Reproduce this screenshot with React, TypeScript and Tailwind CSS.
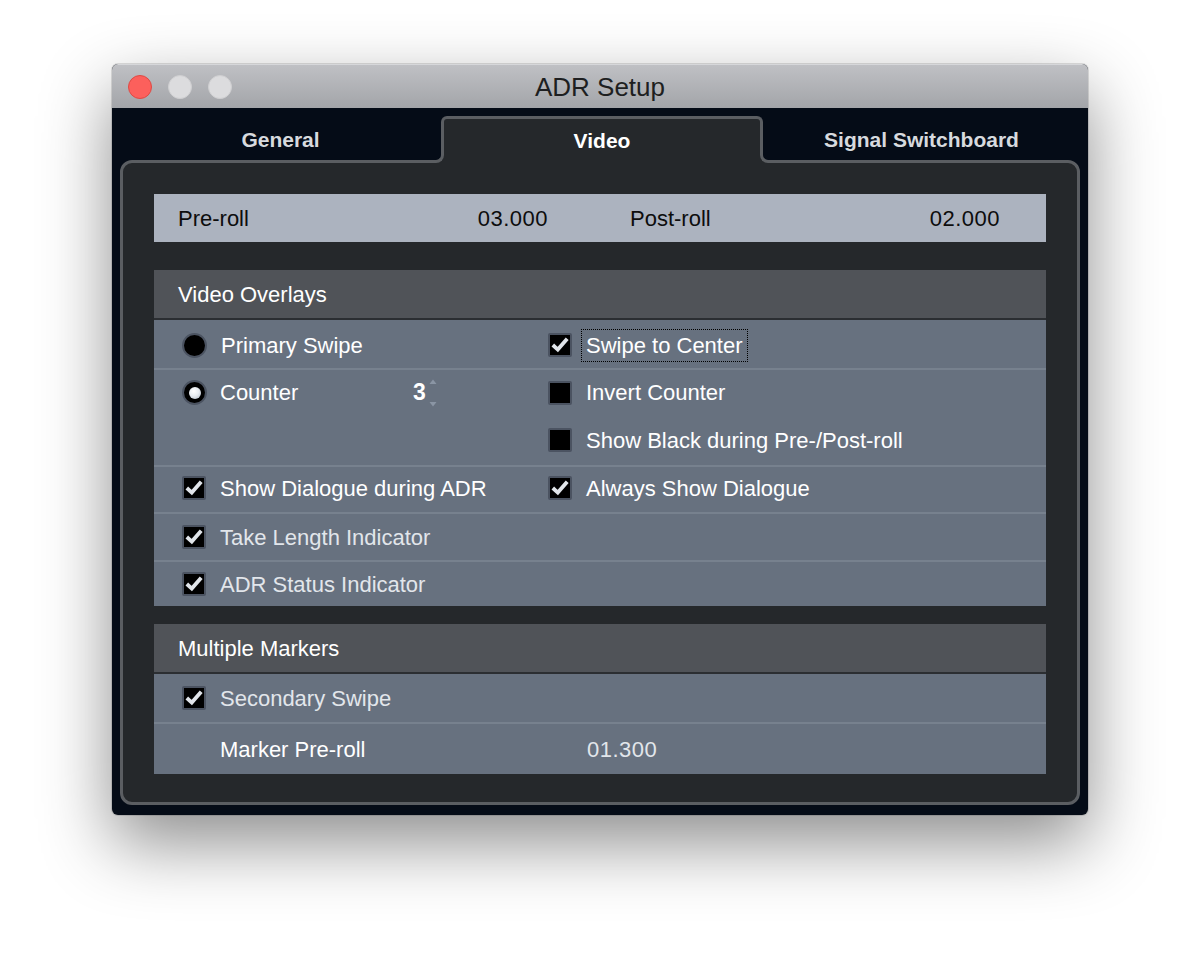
import React from 'react';

const FONT = "font-['Liberation_Sans',Arial,Helvetica,sans-serif]";

function Check() {
  return (
    <span className="flex h-[24px] w-[24px] shrink-0 items-center justify-center rounded-[2px] border-2 border-[#4b5361] bg-black">
      <svg width="20" height="20" viewBox="0 0 20 20">
        <path d="M2.8 10 L7.8 14.6 L17.2 3.8" fill="none" stroke="#e1e5ea" strokeWidth="3.8" strokeLinejoin="miter" />
      </svg>
    </span>
  );
}

function Box() {
  return <span className="h-[24px] w-[24px] shrink-0 rounded-[2px] border-2 border-[#4b5361] bg-black" />;
}

function Radio({ on }: { on?: boolean }) {
  return (
    <span className="flex h-[25px] w-[25px] shrink-0 items-center justify-center rounded-full border-2 border-[#4b5361] bg-black">
      {on && <span className="h-[12px] w-[12px] rounded-full bg-[radial-gradient(circle_at_40%_35%,#ffffff_0%,#e8ecf1_45%,#aeb7c3_100%)]" />}
    </span>
  );
}

function Item({
  control,
  label,
  dim,
}: {
  control: React.ReactNode;
  label: React.ReactNode;
  dim?: boolean;
}) {
  return (
    <div className="flex items-center gap-[14px]">
      {control}
      <span className={dim ? 'text-[#e2e6eb]' : 'text-white'}>{label}</span>
    </div>
  );
}

function SectionHeader({ title }: { title: string }) {
  return (
    <div className="flex h-[50px] items-center border-b-2 border-[#2b2e32] bg-[#505358] pl-[24px] text-white">
      {title}
    </div>
  );
}

export default function App() {
  return (
    <div className={`min-h-[976px] w-full bg-white pl-[112px] pt-[64px] text-[22px] ${FONT}`}>
      <div className="w-[976px] overflow-hidden rounded-[6px] bg-[#050c17] shadow-[0_28px_70px_rgba(0,0,0,0.45),0_0_0_1px_rgba(0,0,0,0.12)]">
        {/* Title bar */}
        <div className="grid h-[44px] grid-cols-[1fr_auto_1fr] items-center border-t border-[#d6d7da] bg-gradient-to-b from-[#bfc0c4] to-[#a3a5a9]">
          <div className="flex items-center gap-[16px] pl-[16px]">
            <span className="h-[24px] w-[24px] rounded-full border border-[#de4a44] bg-[#fc605c]" />
            <span className="h-[24px] w-[24px] rounded-full border border-[#cfcfd1] bg-[#dcdcde]" />
            <span className="h-[24px] w-[24px] rounded-full border border-[#cfcfd1] bg-[#dcdcde]" />
          </div>
          <div className="text-[26px] leading-none text-[#1e1f21]">ADR Setup</div>
          <div />
        </div>

        {/* Tabs */}
        <div className="grid h-[52px] grid-cols-[321px_322px_1fr] px-[8px] text-[21px] font-bold">
          <div className="flex items-center justify-center pt-[12px] text-[#d7dade]">General</div>
          <div className="relative z-10 mb-[-3px] mt-[8px] flex h-[47px] items-center justify-center rounded-t-[6px] border-[3px] border-b-0 border-[#5b5e62] bg-[#25282b] text-white">
            Video
            <span className="absolute bottom-0 left-[-8px] h-[8px] w-[8px] bg-[#25282b]">
              <span className="block h-full w-full rounded-br-[8px] border-b-[3px] border-r-[3px] border-[#5b5e62] bg-[#050c17]" />
            </span>
            <span className="absolute bottom-0 right-[-8px] h-[8px] w-[8px] bg-[#25282b]">
              <span className="block h-full w-full rounded-bl-[8px] border-b-[3px] border-l-[3px] border-[#5b5e62] bg-[#050c17]" />
            </span>
          </div>
          <div className="flex items-center justify-center pt-[12px] text-[#d7dade]">Signal Switchboard</div>
        </div>

        {/* Panel */}
        <div className="mx-[8px] mb-[10px] rounded-[12px] border-[3px] border-[#5b5e62] bg-[#25282b] px-[31px] pb-[28px] pt-[31px]">
          {/* Pre/Post roll */}
          <div className="flex h-[48px] items-center bg-[#acb3bf] pl-[24px] text-[#0d0d0d]">
            <span className="w-[230px]">Pre-roll</span>
            <span className="w-[140px] text-right tracking-[0.5px]">03.000</span>
            <span className="w-[82px]" />
            <span className="w-[230px]">Post-roll</span>
            <span className="w-[140px] text-right tracking-[0.5px]">02.000</span>
          </div>

          {/* Video Overlays */}
          <div className="mt-[28px]">
            <SectionHeader title="Video Overlays" />
            <div className="bg-[#67717f]">
              <div className="grid h-[48px] grid-cols-[394px_1fr] items-center pt-[2px]">
                <div className="pl-[28px]">
                  <Item control={<Radio />} label="Primary Swipe" />
                </div>
                <div className="flex items-center gap-[9px]">
                  <Check />
                  <span className="border border-dotted border-black px-[4px] py-[3px] leading-[25px] text-white">
                    Swipe to Center
                  </span>
                </div>
              </div>

              <div className="grid h-[97px] grid-cols-[394px_1fr] border-t-2 border-[#77818e]">
                <div className="flex h-[45px] items-center pl-[28px]">
                  <Radio on />
                  <span className="ml-[13px] w-[193px] text-white">Counter</span>
                  <span className="text-[23px] font-bold text-white">3</span>
                  <svg className="ml-[3px]" width="8" height="28" viewBox="0 0 8 28">
                    <path d="M4 0.5 L7.5 5 L0.5 5 Z" fill="#8a95a4" />
                    <path d="M4 27.5 L7.5 23 L0.5 23 Z" fill="#8a95a4" />
                  </svg>
                </div>
                <div className="flex flex-col">
                  <div className="flex h-[45px] items-center">
                    <Item control={<Box />} label="Invert Counter" />
                  </div>
                  <div className="flex h-[50px] items-center">
                    <Item control={<Box />} label="Show Black during Pre-/Post-roll" />
                  </div>
                </div>
              </div>

              <div className="grid h-[47px] grid-cols-[394px_1fr] items-center border-t-2 border-[#77818e] pb-[3px]">
                <div className="pl-[28px]">
                  <Item control={<Check />} label="Show Dialogue during ADR" />
                </div>
                <Item control={<Check />} label="Always Show Dialogue" />
              </div>

              <div className="flex h-[48px] items-center border-t-2 border-[#77818e] pl-[28px]">
                <Item control={<Check />} label="Take Length Indicator" dim />
              </div>

              <div className="flex h-[46px] items-center border-t-2 border-[#77818e] pl-[28px]">
                <Item control={<Check />} label="ADR Status Indicator" dim />
              </div>
            </div>
          </div>

          {/* Multiple Markers */}
          <div className="mt-[18px]">
            <SectionHeader title="Multiple Markers" />
            <div className="bg-[#67717f]">
              <div className="flex h-[48px] items-center pl-[28px]">
                <Item control={<Check />} label="Secondary Swipe" dim />
              </div>
              <div className="grid h-[52px] grid-cols-[394px_1fr] items-center border-t-2 border-[#77818e]">
                <span className="pl-[66px] text-white">Marker Pre-roll</span>
                <span className="pl-[39px] tracking-[0.5px] text-[#e2e6eb]">01.300</span>
              </div>
            </div>
          </div>
        </div>
      </div>
    </div>
  );
}
